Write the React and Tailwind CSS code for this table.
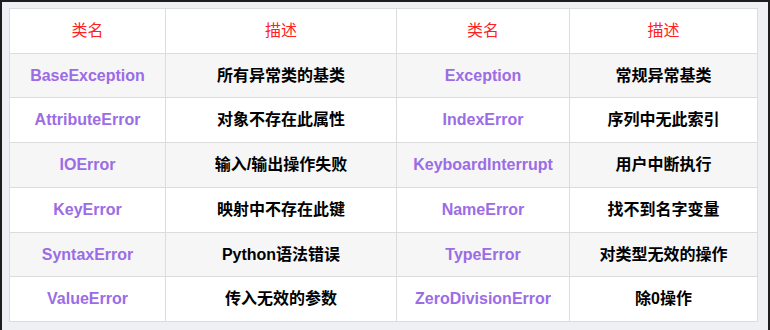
import React from 'react';

const rows = [
  ['BaseException', '所有异常类的基类', 'Exception', '常规异常基类', 'h-[44px]'],
  ['AttributeError', '对象不存在此属性', 'IndexError', '序列中无此索引', 'h-[45px]'],
  ['IOError', '输入/输出操作失败', 'KeyboardInterrupt', '用户中断执行', 'h-[45px]'],
  ['KeyError', '映射中不存在此键', 'NameError', '找不到名字变量', 'h-[45px]'],
  ['SyntaxError', 'Python语法错误', 'TypeError', '对类型无效的操作', 'h-[44px]'],
  ['ValueError', '传入无效的参数', 'ZeroDivisionError', '除0操作', 'h-[45px]'],
];

const App = () => {
  return (
    <div className="w-[770px] h-[330px] bg-[#1e1e1e] pl-[2px] pt-[2px] pr-[2px] overflow-hidden">
      <div
        className="h-full bg-[#eff0f4] pl-[7px] pt-[6px]"
        style={{ fontFamily: '"Liberation Sans", "Noto Sans CJK SC", sans-serif' }}
      >
        <table className="table-fixed border-collapse w-[748px] text-[16px] text-center">
          <colgroup>
            <col className="w-[156px]" />
            <col className="w-[231px]" />
            <col className="w-[173px]" />
            <col className="w-[188px]" />
          </colgroup>
          <thead>
            <tr className="bg-white h-[45px]">
              <th className="border border-[#dcdcdc] font-normal text-[#ff2020]">类名</th>
              <th className="border border-[#dcdcdc] font-normal text-[#ff2020]">描述</th>
              <th className="border border-[#dcdcdc] font-normal text-[#ff2020]">类名</th>
              <th className="border border-[#dcdcdc] font-normal text-[#ff2020]">描述</th>
            </tr>
          </thead>
          <tbody>
            {rows.map((r, i) => (
              <tr key={i} className={(i % 2 === 0 ? 'bg-[#f6f6f6] ' : 'bg-white ') + r[4]}>
                <td className="border border-[#dcdcdc] p-0 font-bold text-[#9b6ce6]">{r[0]}</td>
                <td className="border border-[#dcdcdc] p-0 font-bold text-black">{r[1]}</td>
                <td className="border border-[#dcdcdc] p-0 font-bold text-[#9b6ce6]">{r[2]}</td>
                <td className="border border-[#dcdcdc] p-0 font-bold text-black">{r[3]}</td>
              </tr>
            ))}
          </tbody>
        </table>
      </div>
    </div>
  );
};

export default App;
